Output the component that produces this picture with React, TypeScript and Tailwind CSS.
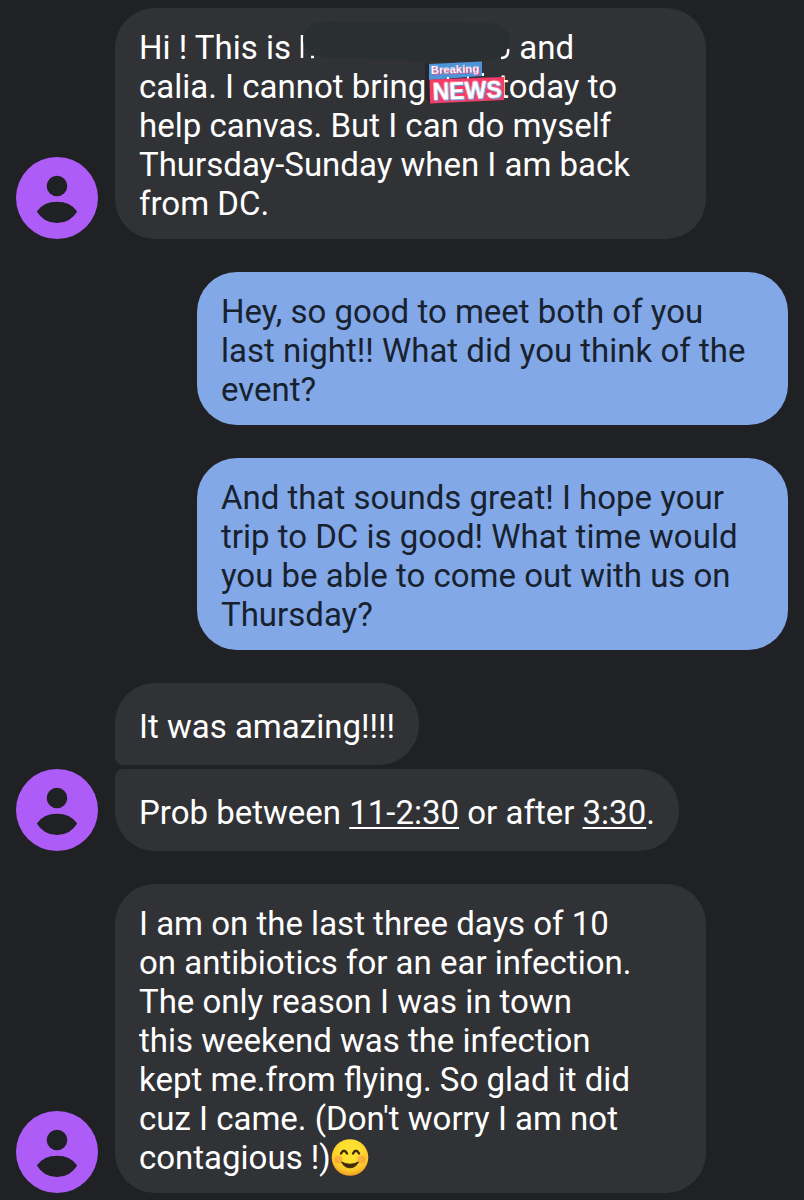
import type {ReactNode} from 'react';
import clsx from 'clsx';

function Avatar() {
    return (
        <svg className="size-[82px]" viewBox="0 0 82 82" role="img" aria-label="Contact">
            <circle cx="41" cy="41" r="41" fill="#ae5cf7"/>
            <circle cx="41" cy="29" r="10.3" fill="#202124"/>
            <path
                d="M22 54.600C26 49 33 45.700 41 45.700S56 49 60 54.600C56.500 60.500 49.500 65 41 65S25.500 60.500 22 54.600Z"
                fill="#202124"
                stroke="#202124"
                strokeWidth="2"
                strokeLinejoin="round"
            />
        </svg>
    );
}

function Redaction() {
    return (
        <svg className="inline-block h-[39px] w-[212px] overflow-visible align-bottom" viewBox="0 0 212 39" aria-hidden="true">
            <path d="M3 7V30M12 29H15" stroke="#fff" strokeWidth="2.500"/>
            <path d="M202 30Q210 30 209 21" fill="none" stroke="#fff" strokeWidth="2.500"/>
            <path d="M24 -7L193 -5Q210 -2 210 12Q210 28 194 32Q165 34 120 33L24 29Q5 26 4 12Q5 -5 24 -7Z" fill="#2a2f32"/>
        </svg>
    );
}

function NewsSticker() {
    return (
        <svg className="relative inline-block h-[39px] w-[72px] overflow-visible align-bottom" viewBox="0 0 72 39" role="img" aria-label="Breaking news">
            <path d="M-1 -4L4 -3V36L2 34L-1 30Z" fill="#25262b"/>
            <path d="M55 6H58V9H55Z" fill="#fff"/>
            <path d="M3 -3L56 -5.500V9L3 13Z" fill="#4d94d8"/>
            <path d="M3.500 12.500L78 10V33L4 36.500Z" fill="#f63c66"/>
            <path d="M21 10H23V12H21ZM41 9.500H43V11.500H41Z" fill="#fff"/>
            <g transform="rotate(-2 5 8)" fontFamily="Liberation Sans, Arial, sans-serif" fontWeight="700" fill="#fff">
                <text x="5" y="7" fontSize="11.300" className="drop-shadow-[1px_1px_0_#e94a82]">Breaking</text>
                <text x="6" y="32.500" fontSize="23" stroke="#fff" strokeWidth="0.600" className="drop-shadow-[1px_1px_0_#4d94d8]">NEWS</text>
            </g>
        </svg>
    );
}

function SmileEmoji() {
    return (
        <svg className="inline-block size-[38px] align-bottom" viewBox="0 0 38 38" role="img" aria-label="Smiling face">
            <defs>
                <radialGradient id="face" cx="0.5" cy="0.35" r="0.65">
                    <stop offset="0.4" stopColor="#fde030"/>
                    <stop offset="0.8" stopColor="#fbc62a"/>
                    <stop offset="1" stopColor="#f09a1f"/>
                </radialGradient>
            </defs>
            <circle cx="19" cy="18.500" r="18.300" fill="url(#face)"/>
            <circle cx="7.500" cy="20.500" r="4" fill="#f58a4a" opacity="0.5"/>
            <circle cx="30.500" cy="20.500" r="4" fill="#f58a4a" opacity="0.5"/>
            <path d="M10 14.500Q13 9 16 14.500M22 14.500Q25 9 28 14.500" fill="none" stroke="#422b0d" strokeWidth="2.400" strokeLinecap="round"/>
            <path d="M10.500 23Q19 27.500 27.500 23Q24.500 28.800 19 28.800T10.500 23Z" fill="#422b0d" stroke="#422b0d" strokeWidth="1" strokeLinejoin="round"/>
        </svg>
    );
}

type BubbleProps = {
    outgoing?: boolean;
    wide?: boolean;
    className?: string;
    children: ReactNode;
};

function Bubble({outgoing, wide, className = 'rounded-[40px]', children}: BubbleProps) {
    return (
        <div
            className={clsx(
                'flex min-h-[82px] max-w-[591px] items-center px-6 pt-5 pb-4',
                wide && 'w-full',
                outgoing ? 'bg-[#82a8e7] text-[#18222f]' : 'bg-[#313235] text-white',
                className,
            )}
        >
            <p className="whitespace-pre-line">{children}</p>
        </div>
    );
}

function Incoming({children}: {children: ReactNode}) {
    return (
        <div className="flex items-end gap-[17px]">
            <div className="shrink-0">
                <Avatar/>
            </div>
            <div className="flex min-w-0 flex-1 flex-col items-start gap-1">{children}</div>
        </div>
    );
}

function Outgoing({children}: {children: ReactNode}) {
    return <div className="flex justify-end">{children}</div>;
}

export default function App() {
    return (
        <main className="flex min-h-screen flex-col gap-[33px] bg-[#202124] px-4 pt-2 font-['Roboto',sans-serif] text-[33px] leading-[39px]">
            <Incoming>
                <Bubble wide>
                    Hi ! This is <Redaction/> and{'\n'}
                    calia. I cannot bring<NewsSticker/>today to{'\n'}
                    help canvas. But I can do myself{'\n'}
                    Thursday-Sunday when I am back{'\n'}
                    from DC.
                </Bubble>
            </Incoming>

            <Outgoing>
                <Bubble outgoing wide>
                    Hey, so good to meet both of you{'\n'}
                    last night!! What did you think of the{'\n'}
                    event?
                </Bubble>
            </Outgoing>

            <Outgoing>
                <Bubble outgoing wide>
                    And that sounds great! I hope your{'\n'}
                    trip to DC is good! What time would{'\n'}
                    you be able to come out with us on{'\n'}
                    Thursday?
                </Bubble>
            </Outgoing>

            <Incoming>
                <Bubble className="rounded-[40px] rounded-bl-lg">It was amazing!!!!</Bubble>
                <Bubble className="rounded-[40px] rounded-tl-lg">
                    Prob between{' '}
                    <a href="#" className="underline decoration-2 underline-offset-3">11-2:30</a> or after{' '}
                    <a href="#" className="underline decoration-2 underline-offset-3">3:30</a>.
                </Bubble>
            </Incoming>

            <Incoming>
                <Bubble wide>
                    I am on the last three days of 10{'\n'}
                    on antibiotics for an ear infection.{'\n'}
                    The only reason I was in town{'\n'}
                    this weekend was the infection{'\n'}
                    kept me.from flying. So glad it did{'\n'}
                    cuz I came. (Don't worry I am not{'\n'}
                    contagious !)<SmileEmoji/>
                </Bubble>
            </Incoming>
        </main>
    );
}
